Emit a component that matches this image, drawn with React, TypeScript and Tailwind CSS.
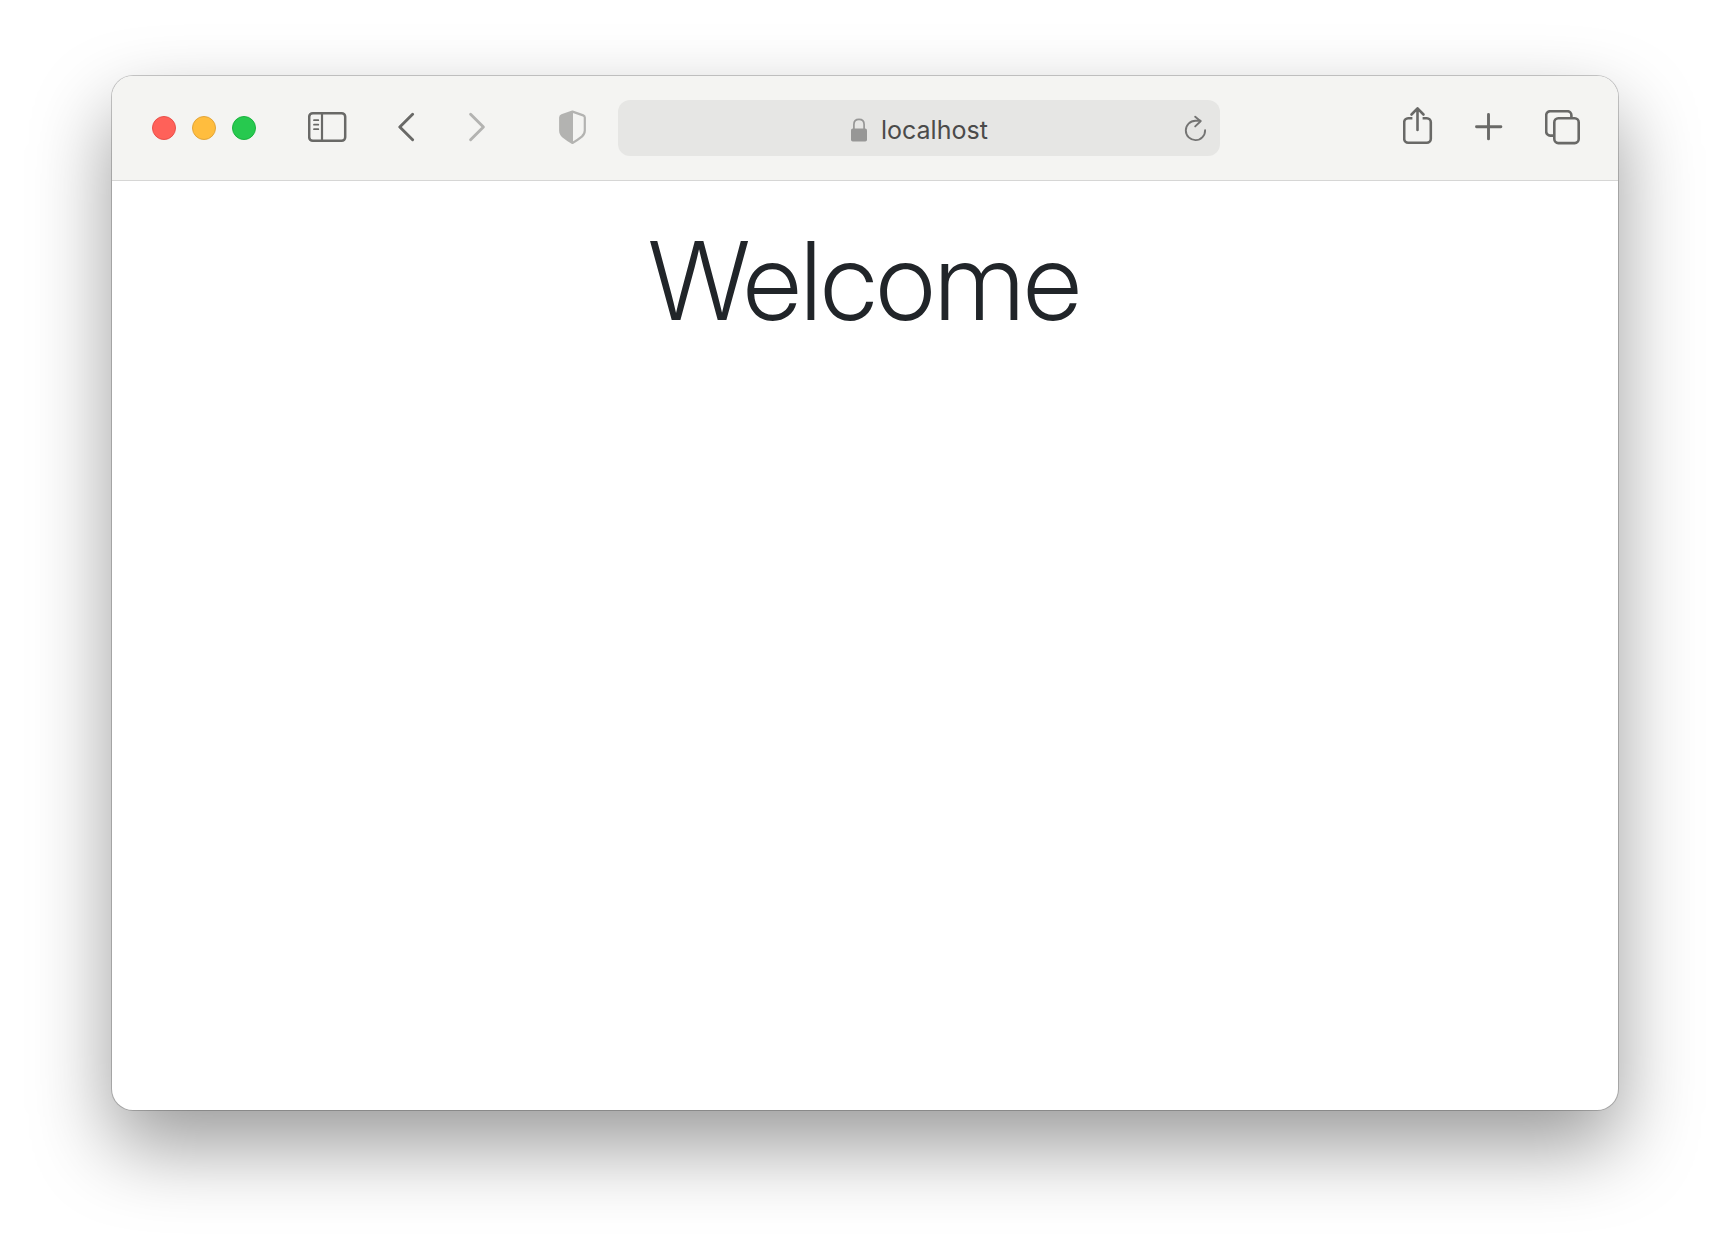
import React from "react";

function IconButton({ label, className = "", disabled = false, children }: { label: string; className?: string; disabled?: boolean; children: React.ReactNode }) {
  return (
    <button type="button" aria-label={label} disabled={disabled} className={`shrink-0 ${className}`}>
      {children}
    </button>
  );
}

function Toolbar() {
  return (
    <header className="flex h-[105px] items-center border-b border-[#d6d6d5] bg-[#f4f4f2] pl-10 pr-[38px] text-[#696967]">
      <div className="flex shrink-0 gap-4">
        <button type="button" aria-label="Close window" className="size-6 rounded-full border border-[#e9504a] bg-[#ff6159]" />
        <button type="button" aria-label="Minimize window" className="size-6 rounded-full border border-[#e2a53a] bg-[#ffbd3e]" />
        <button type="button" aria-label="Zoom window" className="size-6 rounded-full border border-[#1bb33f] bg-[#27c94f]" />
      </div>
      <IconButton label="Toggle sidebar" className="ml-[52px]">
        <svg className="block" width="39" height="34" viewBox="0 0 39 34" fill="none" stroke="currentColor" strokeWidth="2.5" strokeLinecap="round">
          <rect x="1.2" y="2.2" width="36" height="27.6" rx="3.6" />
          <path d="M14 2.2v27.6" strokeWidth="2.2" />
          <path d="M6 9.2h4.3M6 13.7h4.3M6 18.2h4.3" strokeWidth="1.8" />
        </svg>
      </IconButton>
      <IconButton label="Back" className="ml-[51px]">
        <svg className="block" width="18" height="34" viewBox="0 0 18 34" fill="none" stroke="currentColor" strokeWidth="2.9" strokeLinecap="round" strokeLinejoin="round">
          <path d="M14.6 3.2 1.8 16l12.800 12.800" />
        </svg>
      </IconButton>
      <IconButton label="Forward" disabled className="ml-[52px] text-[#b3b3b1]">
        <svg className="block" width="18" height="34" viewBox="0 0 18 34" fill="none" stroke="currentColor" strokeWidth="2.9" strokeLinecap="round" strokeLinejoin="round">
          <path d="m2.600 3.200 12.800 12.800-12.800 12.800" />
        </svg>
      </IconButton>
      <IconButton label="Privacy report" className="ml-[73px] text-[#b3b3b1]">
        <svg className="block" width="27" height="36" viewBox="0 0 27 36" fill="none" stroke="currentColor" strokeWidth="2.2" strokeLinejoin="round">
          <path d="M13.5 1.6 24.2 5.4q1.6.6 1.6 2.2v13q0 3.5-3 6.1-4.6 3.8-9.3 6.2-4.7-2.4-9.3-6.2-3-2.6-3-6.1v-13q0-1.6 1.6-2.2z" />
          <path d="M14 1.6v31.3L4.2 26.7q-3-2.6-3-6.1v-13q0-1.6 1.6-2.2z" fill="currentColor" stroke="none" />
        </svg>
      </IconButton>
      <div className="ml-8 flex h-14 min-w-0 flex-1 items-center rounded-xl bg-[#e6e6e4] pl-10 pr-3">
        <div className="flex flex-1 items-center justify-center gap-3.5 pt-[3px]">
          <svg className="shrink-0" width="16" height="24" viewBox="0 0 16 24" fill="none" aria-hidden="true">
            <path d="M2.9 11V6.4C2.9 3.2 5 1.3 8 1.3s5.1 1.9 5.1 5.1V11" stroke="#979796" strokeWidth="1.7" />
            <rect y="10.4" width="16" height="13.2" rx="1.8" fill="#979796" />
          </svg>
          <input
            type="text"
            aria-label="Address"
            defaultValue="localhost"
            className="w-[110px] bg-transparent p-0 font-['Inter',sans-serif] text-[25px] leading-8 text-[#4b4b4a] outline-none"
          />
        </div>
        <IconButton label="Reload page" className="text-[#747473]">
          <svg className="block" width="24" height="28" viewBox="0 0 24 28" fill="none" stroke="currentColor" strokeWidth="1.9" strokeLinecap="round" strokeLinejoin="round">
            <path d="M21.1 16.1A9.65 9.65 0 1 1 11.5 6.8h5" />
            <path d="m11.2 2.7 5.4 4.5-5.4 5.2" />
          </svg>
        </IconButton>
      </div>
      <IconButton label="Share" className="ml-[183px]">
        <svg className="block" width="30" height="44" viewBox="0 0 30 44" fill="none" stroke="currentColor" strokeWidth="2.6" strokeLinecap="round" strokeLinejoin="round">
          <path d="M9.4 12.2H5.2a4 4 0 0 0-4 4v16.6a4 4 0 0 0 4 4h18.6a4 4 0 0 0 4-4V16.2a4 4 0 0 0-4-4h-4.2" strokeLinecap="butt" />
          <path d="M14.5 24V2.6M8.5 8.500l6-6.200 6 6.200" />
        </svg>
      </IconButton>
      <IconButton label="New tab" className="ml-[42px]">
        <svg className="block" width="28" height="32" viewBox="0 0 28 32" fill="none" stroke="currentColor" strokeWidth="2.9" strokeLinecap="round">
          <path d="M13.5 2.5v24.4M1.5 14.700h24.400" />
        </svg>
      </IconButton>
      <IconButton label="Show all tabs" className="ml-[42px]">
        <svg className="block" width="35" height="36" viewBox="0 0 35 36" fill="none" stroke="currentColor" strokeWidth="2.6" strokeLinejoin="round">
          <path d="M8.5 25.6H5.2a4 4 0 0 1-4-4V5.2a4 4 0 0 1 4-4h17.2a4 4 0 0 1 4 4v3" />
          <rect x="9.3" y="8.3" width="24.4" height="24.8" rx="4" />
        </svg>
      </IconButton>
    </header>
  );
}

export default function App() {
  return (
    <div className="flex min-h-screen flex-col bg-white px-28 pb-[148px] pt-[76px]">
      <section aria-label="Browser window" className="flex flex-1 flex-col overflow-hidden rounded-[21px] bg-white shadow-[0_0_0_1px_rgba(0,0,0,0.2),0_36px_80px_rgba(0,0,0,0.4)]">
        <Toolbar />
        <main className="flex-1 pt-9">
          <h1 className="text-center font-['Inter_Display','Inter',sans-serif] text-[108px] font-[360] leading-[128px] text-[#212529]">Welcome</h1>
        </main>
      </section>
    </div>
  );
}
